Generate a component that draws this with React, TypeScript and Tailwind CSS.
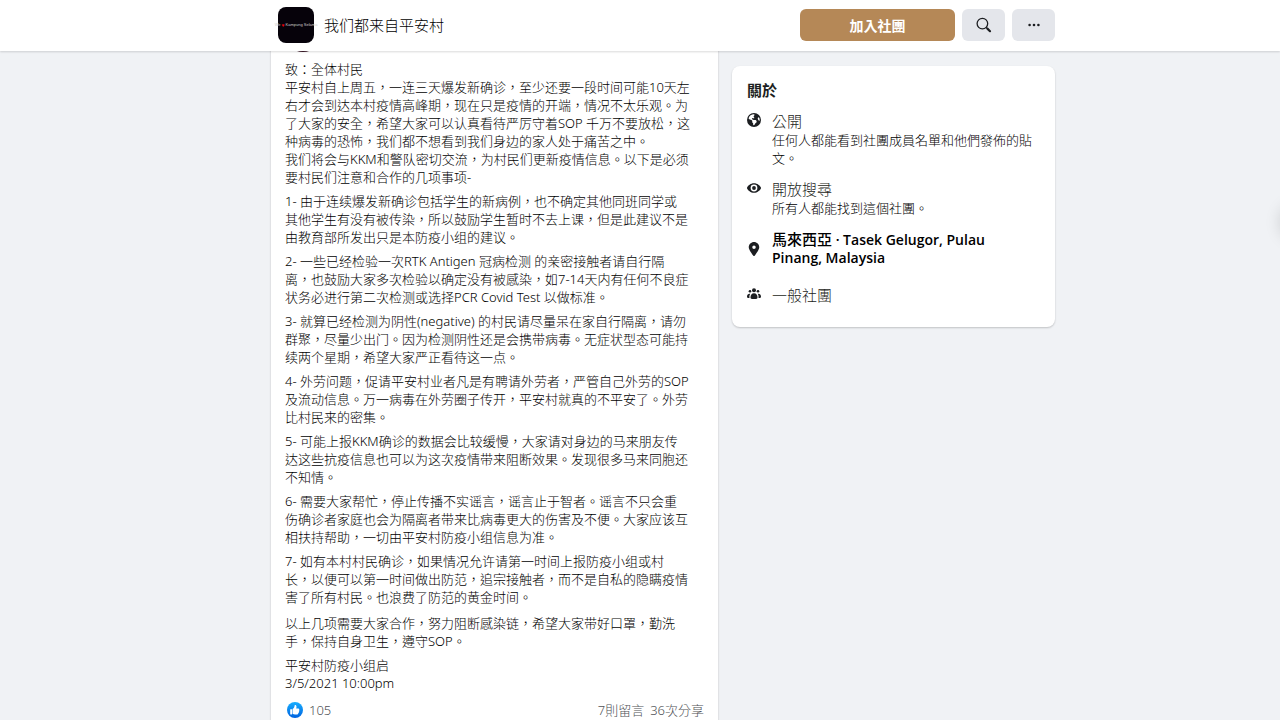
import { FaEarthAmericas, FaLocationDot } from "react-icons/fa6";

const paragraphs = [
  [
    "致：全体村民",
    "平安村自上周五，一连三天爆发新确诊，至少还要一段时间可能10天左",
    "右才会到达本村疫情高峰期，现在只是疫情的开端，情况不太乐观。为",
    "了大家的安全，希望大家可以认真看待严厉守着SOP 千万不要放松，这",
    "种病毒的恐怖，我们都不想看到我们身边的家人处于痛苦之中。",
    "我们将会与KKM和警队密切交流，为村民们更新疫情信息。以下是必须",
    "要村民们注意和合作的几项事项-",
  ],
  [
    "1- 由于连续爆发新确诊包括学生的新病例，也不确定其他同班同学或",
    "其他学生有没有被传染，所以鼓励学生暂时不去上课，但是此建议不是",
    "由教育部所发出只是本防疫小组的建议。",
  ],
  [
    "2- 一些已经检验一次RTK Antigen 冠病检测 的亲密接触者请自行隔",
    "离，也鼓励大家多次检验以确定没有被感染，如7-14天内有任何不良症",
    "状务必进行第二次检测或选择PCR Covid Test 以做标准。",
  ],
  [
    "3- 就算已经检测为阴性(negative) 的村民请尽量呆在家自行隔离，请勿",
    "群聚，尽量少出门。因为检测阴性还是会携带病毒。无症状型态可能持",
    "续两个星期，希望大家严正看待这一点。",
  ],
  [
    "4- 外劳问题，促请平安村业者凡是有聘请外劳者，严管自己外劳的SOP",
    "及流动信息。万一病毒在外劳圈子传开，平安村就真的不平安了。外劳",
    "比村民来的密集。",
  ],
  [
    "5- 可能上报KKM确诊的数据会比较缓慢，大家请对身边的马来朋友传",
    "达这些抗疫信息也可以为这次疫情带来阻断效果。发现很多马来同胞还",
    "不知情。",
  ],
  [
    "6- 需要大家帮忙，停止传播不实谣言，谣言止于智者。谣言不只会重",
    "伤确诊者家庭也会为隔离者带来比病毒更大的伤害及不便。大家应该互",
    "相扶持帮助，一切由平安村防疫小组信息为准。",
  ],
  [
    "7- 如有本村村民确诊，如果情况允许请第一时间上报防疫小组或村",
    "长，以便可以第一时间做出防范，追宗接触者，而不是自私的隐瞒疫情",
    "害了所有村民。也浪费了防范的黄金时间。",
  ],
];

const closing = [
  [
    "以上几项需要大家合作，努力阻断感染链，希望大家带好口罩，勤洗",
    "手，保持自身卫生，遵守SOP。",
  ],
  ["平安村防疫小组启", "3/5/2021 10:00pm"],
];

const SearchIcon = () => (
  <svg width="16" height="16" viewBox="0 0 16 16" fill="none" stroke="#1c1e21">
    <circle cx="6.4" cy="6.6" r="5.3" strokeWidth="1.3" />
    <path d="M10.2 10.4 L11.4 11.6" strokeWidth="1.3" />
    <path d="M11.4 11.6 L14 14.2" strokeWidth="2.2" strokeLinecap="round" />
  </svg>
);

const DotsIcon = () => (
  <svg width="14" height="14" viewBox="0 0 14 14" fill="#1c1e21">
    <circle cx="2.6" cy="7" r="1.3" />
    <circle cx="7" cy="7" r="1.3" />
    <circle cx="11.4" cy="7" r="1.3" />
  </svg>
);

const EyeIcon = () => (
  <svg width="14" height="14" viewBox="0 0 14 14">
    <path
      fill="#1c1e21"
      d="M7 2.2C3.6 2.2 1 4.6 0.1 6.5a1 1 0 0 0 0 1C1 9.4 3.6 11.8 7 11.8s6-2.4 6.9-4.3a1 1 0 0 0 0-1C13 4.6 10.4 2.2 7 2.2Z"
    />
    <circle cx="7" cy="7" r="3.4" fill="#fff" />
    <circle cx="7" cy="7" r="1.9" fill="#1c1e21" />
  </svg>
);

const PeopleIcon = () => (
  <svg width="14" height="14" viewBox="0 0 14 14" fill="#1c1e21">
    <circle cx="7" cy="3.3" r="2" />
    <circle cx="3" cy="4.3" r="1.3" />
    <circle cx="11" cy="4.3" r="1.3" />
    <path d="M7 6.3c-2.3 0-3.5 1.7-3.5 4 0 1 .5 1.6 1.4 1.6h4.2c.9 0 1.4-.6 1.4-1.6 0-2.3-1.2-4-3.5-4Z" />
    <path d="M3.3 6.8C1.2 6.5 0 7.9 0 9.8c0 .7.4 1.1 1 1.1h1.5c-.2-1.6 0-3 .8-4.1Z" />
    <path d="M10.7 6.8c2.1-.3 3.3 1.1 3.3 3 0 .7-.4 1.1-1 1.1h-1.5c.2-1.6 0-3-.8-4.1Z" />
  </svg>
);

const LikeIcon = () => (
  <svg width="16" height="16" viewBox="0 0 16 16">
    <defs>
      <linearGradient id="like" x1="0" y1="0" x2="0" y2="1">
        <stop offset="0" stopColor="#18afff" />
        <stop offset="1" stopColor="#0062df" />
      </linearGradient>
    </defs>
    <circle cx="8" cy="8" r="8" fill="url(#like)" />
    <path
      fill="#fff"
      d="M12.2 7.338a.9.9 0 0 0-.87-.78H9.2c.2-.6.3-1.3.3-1.8 0-1.1-.6-1.76-1.25-1.76-.5 0-.7.3-.7.8 0 1.5-.9 2.6-1.95 3.3v4.7c.6.4 1.4.7 2.5.7h2.1c.6 0 1-.4 1-.9l-.05-.3c.5-.2.75-.6.7-1.1a.9.9 0 0 0-.05-.3c.4-.2.6-.6.55-1.05a.9.9 0 0 0-.2-.5c.1-.2.15-.6.05-1ZM3.6 7.2h1.1c.2 0 .4.2.4.4v4.4c0 .2-.2.4-.4.4H3.6a.4.4 0 0 1-.4-.4V7.6c0-.2.2-.4.4-.4Z"
    />
  </svg>
);

const Paragraph = ({ lines }) => (
  <p>
    {lines.map((line) => (
      <span key={line} className="block">
        {line}
      </span>
    ))}
  </p>
);

const AboutRow = ({ icon, title, text }) => (
  <div className="flex gap-[11px]">
    <div className="mt-0.5 w-3.5 shrink-0">{icon}</div>
    <div className="min-w-0">
      <h3 className="text-[15px] leading-5 font-light">{title}</h3>
      {text ? (
        <p className="text-[13px] leading-[18px] font-light text-black">
          {text}
        </p>
      ) : null}
    </div>
  </div>
);

const Header = () => (
  <header className="relative z-10 bg-white pl-[46px] shadow-[0_1px_2px_rgba(0,0,0,0.15)]">
    <div className="mx-auto flex h-[51px] max-w-[784px] items-center pb-px">
      <div className="ml-[7px] flex size-9 shrink-0 items-center justify-center rounded-lg bg-[#06020a] font-['Liberation_Sans',sans-serif] text-[4px] leading-none whitespace-nowrap text-[#ccc]">
        We<span className="px-px text-[5px] text-red-600">♥</span>Kampung Selama
      </div>
      <h1 className="ml-2.5 flex-1 text-[15px] font-light text-black">
        我们都来自平安村
      </h1>
      <div className="flex gap-[7px]">
        <button className="h-8 w-[155px] rounded-md bg-[#b58857] text-[14px] font-bold text-white">
          加入社團
        </button>
        <button
          aria-label="搜尋"
          className="flex h-8 w-[43px] items-center justify-center rounded-md bg-[#e4e6eb]"
        >
          <SearchIcon />
        </button>
        <button
          aria-label="更多"
          className="flex h-8 w-[43px] items-center justify-center rounded-md bg-[#e4e6eb]"
        >
          <DotsIcon />
        </button>
      </div>
    </div>
  </header>
);

const Post = () => (
  <article className="-mt-9 flex-1 bg-white px-3.5 pb-0.5 font-['Noto_Sans','Noto_Sans_CJK_TC',sans-serif] font-light shadow-[0_1px_2px_rgba(0,0,0,0.2)]">
    <div className="size-9 translate-y-px rounded-full bg-[#3a1626]" />
    <div className="mt-[9px] flex flex-col gap-1.5 text-[13px] leading-[18px] whitespace-nowrap text-black">
      {paragraphs.map((lines) => (
        <Paragraph key={lines[0]} lines={lines} />
      ))}
    </div>
    <div className="mt-2 flex flex-col gap-1.5 text-[13px] leading-[18px] whitespace-nowrap text-black">
      {closing.map((lines) => (
        <Paragraph key={lines[0]} lines={lines} />
      ))}
    </div>
    <div className="mt-[9px] flex items-center text-[13px] leading-[18px] text-[#505256]">
      <div className="ml-0.5">
        <LikeIcon />
      </div>
      <span className="ml-1.5 flex-1">105</span>
      <span>7則留言</span>
      <span className="ml-1.5">36次分享</span>
    </div>
  </article>
);

const About = () => (
  <aside className="mt-[15px] w-[323px] shrink-0 self-start rounded-lg bg-white px-[15px] pt-3.5 pb-[22px] shadow-[0_1px_2px_rgba(0,0,0,0.2)]">
    <h2 className="text-[15px] leading-5 font-bold">關於</h2>
    <div className="mt-[11px] flex flex-col gap-3">
      <AboutRow
        icon={<FaEarthAmericas size={14} />}
        title="公開"
        text="任何人都能看到社團成員名單和他們發佈的貼文。"
      />
      <AboutRow
        icon={<EyeIcon />}
        title="開放搜尋"
        text="所有人都能找到這個社團。"
      />
      <div className="mt-px flex items-center gap-[11px]">
        <FaLocationDot size={14} className="shrink-0" />
        <p className="text-[14px] leading-[18px] font-semibold text-black">
          <span className="text-[15px] font-medium">馬來西亞</span> · Tasek
          Gelugor, Pulau
          <br />
          Pinang, Malaysia
        </p>
      </div>
      <div className="mt-1.5">
        <AboutRow icon={<PeopleIcon />} title="一般社團" text="" />
      </div>
    </div>
  </aside>
);

export default function App() {
  return (
    <div
      lang="zh-Hant"
      className="relative min-h-screen overflow-hidden bg-[#f0f2f5] font-['Open_Sans','Noto_Sans_CJK_TC',sans-serif] text-[#1c1e21]"
    >
      <Header />
      <main className="pl-[46px]">
        <div className="mx-auto flex max-w-[784px] gap-3.5">
          <Post />
          <About />
        </div>
      </main>
      <div className="absolute top-[204px] left-full h-9 w-9 rounded-full shadow-[0_0_16px_rgba(0,0,0,0.15)]" />
    </div>
  );
}
